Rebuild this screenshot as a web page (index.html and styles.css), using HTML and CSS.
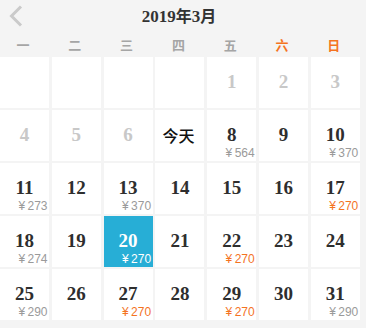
FILE: index.html
```html
<!DOCTYPE html>
<html lang="zh">
<head>
<meta charset="utf-8">
<title>2019年3月</title>
<link rel="stylesheet" href="styles.css">
</head>
<body>
<div class="cal">
  <div class="head">
    <svg class="prev" width="14" height="22" viewBox="0 0 14 22"><polyline points="12,1.5 2.5,11 12,20.5" fill="none" stroke="#cacaca" stroke-width="3"/></svg>
    <div class="title">2019<span class="cjk">年</span>3<span class="cjk">月</span></div>
    <span></span>
  </div>
  <div class="weeks">
    <span>一</span><span>二</span><span>三</span><span>四</span><span>五</span><span class="we">六</span><span class="we">日</span>
  </div>
  <div class="grid">
    <div class="cell"></div>
    <div class="cell"></div>
    <div class="cell"></div>
    <div class="cell"></div>
    <div class="cell past"><span class="num">1</span></div>
    <div class="cell past"><span class="num">2</span></div>
    <div class="cell past"><span class="num">3</span></div>

    <div class="cell past"><span class="num">4</span></div>
    <div class="cell past"><span class="num">5</span></div>
    <div class="cell past"><span class="num">6</span></div>
    <div class="cell"><span class="num today">今天</span></div>
    <div class="cell"><span class="num">8</span><span class="price">¥&#8201;564</span></div>
    <div class="cell"><span class="num">9</span></div>
    <div class="cell"><span class="num">10</span><span class="price">¥&#8201;370</span></div>

    <div class="cell"><span class="num">11</span><span class="price">¥&#8201;273</span></div>
    <div class="cell"><span class="num">12</span></div>
    <div class="cell"><span class="num">13</span><span class="price">¥&#8201;370</span></div>
    <div class="cell"><span class="num">14</span></div>
    <div class="cell"><span class="num">15</span></div>
    <div class="cell"><span class="num">16</span></div>
    <div class="cell"><span class="num">17</span><span class="price low">¥&#8201;270</span></div>

    <div class="cell"><span class="num">18</span><span class="price">¥&#8201;274</span></div>
    <div class="cell"><span class="num">19</span></div>
    <div class="cell sel"><span class="num">20</span><span class="price low">¥&#8201;270</span></div>
    <div class="cell"><span class="num">21</span></div>
    <div class="cell"><span class="num">22</span><span class="price low">¥&#8201;270</span></div>
    <div class="cell"><span class="num">23</span></div>
    <div class="cell"><span class="num">24</span></div>

    <div class="cell"><span class="num">25</span><span class="price">¥&#8201;290</span></div>
    <div class="cell"><span class="num">26</span></div>
    <div class="cell"><span class="num">27</span><span class="price low">¥&#8201;270</span></div>
    <div class="cell"><span class="num">28</span></div>
    <div class="cell"><span class="num">29</span><span class="price low">¥&#8201;270</span></div>
    <div class="cell"><span class="num">30</span></div>
    <div class="cell"><span class="num">31</span><span class="price">¥&#8201;290</span></div>
  </div>
</div>
</body>
</html>
```

FILE: styles.css
```css
html, body {
  margin: 0;
  padding: 0;
  background: #f4f4f4;
}
body {
  width: 366px;
  height: 328px;
  overflow: hidden;
  font-family: "Liberation Serif", "Noto Sans CJK SC", serif;
  color: #2e2e2e;
}
.cal {
  width: 360px;
}
.head {
  height: 32px;
  display: grid;
  grid-template-columns: 1fr auto 1fr;
  align-items: center;
}
.prev {
  display: block;
  margin-left: 9px;
  margin-top: -1px;
}
.title {
  font-size: 17px;
  font-weight: bold;
  line-height: 20px;
  color: #333;
  margin-left: -2px;
}
.cjk {
  font-family: "Noto Sans CJK SC", sans-serif;
  font-size: 16px;
}
.weeks {
  height: 25px;
  display: grid;
  grid-template-columns: repeat(7, 49px);
  column-gap: 2.8px;
  align-items: center;
  justify-items: center;
  font-family: "Noto Sans CJK SC", sans-serif;
  font-size: 13px;
  font-weight: bold;
  color: #a5a5a5;
}
.weeks span {
  margin-left: -3px;
}
.weeks .we {
  color: #f4731f;
}
.grid {
  display: grid;
  grid-template-columns: repeat(7, 49px);
  grid-auto-rows: 51px;
  column-gap: 2.8px;
  row-gap: 2px;
}
.cell {
  background: #fff;
  display: grid;
  grid-template-rows: 1fr auto 1fr;
  justify-items: center;
}
.num {
  grid-row: 2;
  margin-bottom: 1px;
  font-size: 19px;
  line-height: 18px;
  font-weight: bold;
  color: #2e2e2e;
}
.past .num {
  color: #c8c8c8;
}
.num.today {
  font-family: "Noto Sans CJK SC", sans-serif;
  font-size: 16px;
  font-weight: 500;
  color: #111;
  margin-left: -3px;
}
.price {
  grid-row: 3;
  align-self: end;
  justify-self: end;
  margin-right: 1.5px;
  margin-bottom: 2px;
  font-family: "Liberation Sans", sans-serif;
  font-size: 12px;
  line-height: 12px;
  color: #9a9a9a;
  white-space: nowrap;
}
.price.low {
  color: #f4731f;
}
.cell.sel {
  background: #27aed6;
}
.cell.sel .num,
.cell.sel .price {
  color: #fff;
}
```
